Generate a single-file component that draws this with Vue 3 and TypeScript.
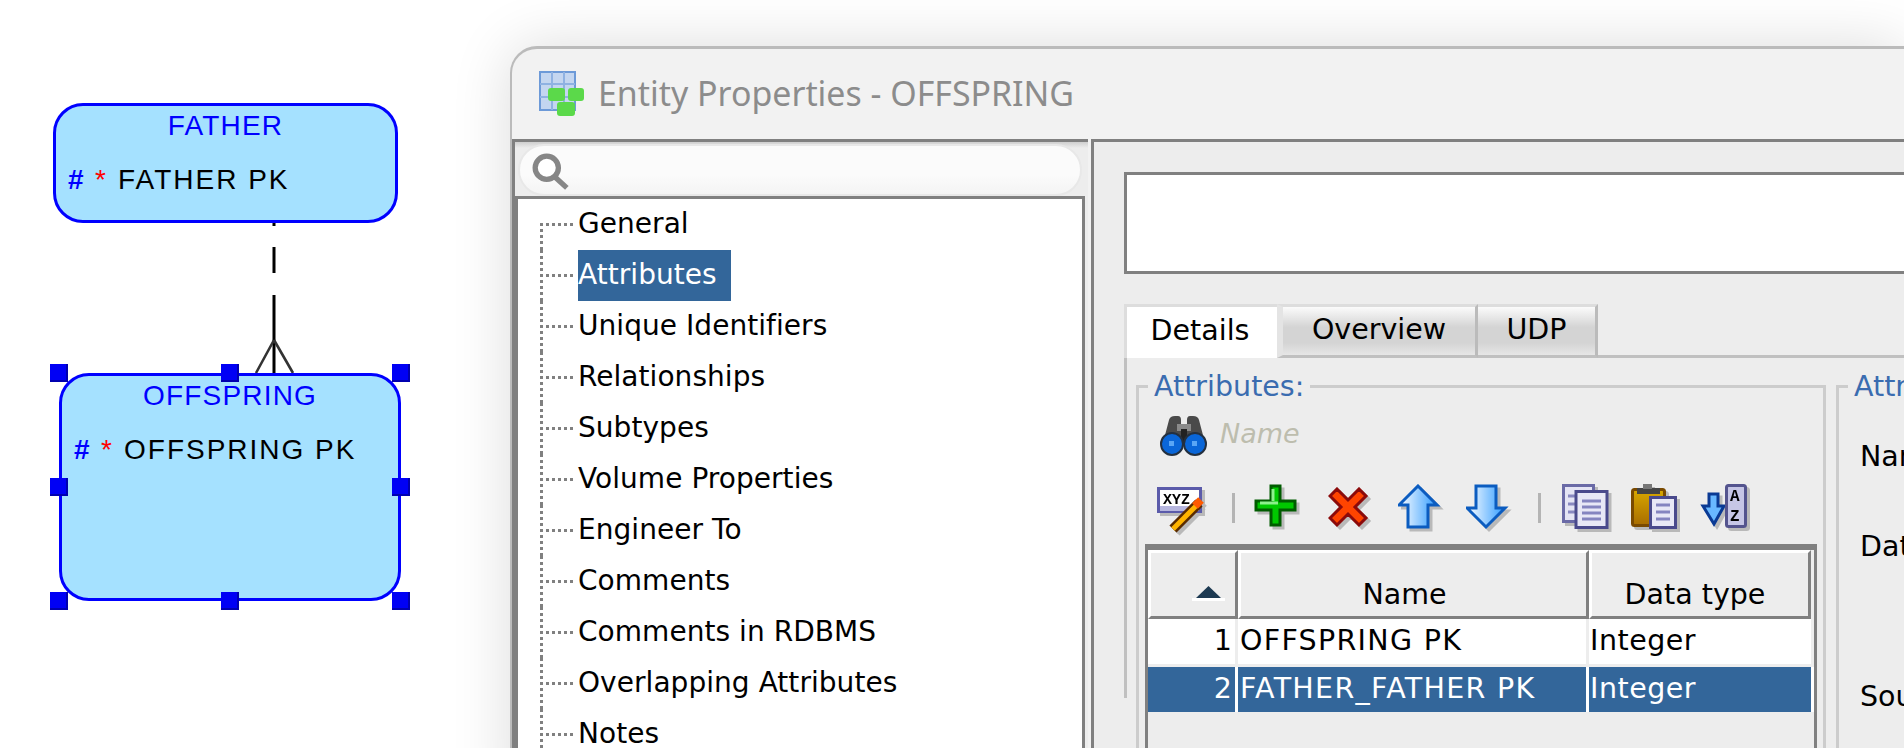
<script setup lang="ts">
const treeItems: string[] = [
  'General', 'Attributes', 'Unique Identifiers', 'Relationships', 'Subtypes', 'Volume Properties',
  'Engineer To', 'Comments', 'Comments in RDBMS', 'Overlapping Attributes', 'Notes'
]
const handles: { x: number; y: number }[] = [
  { x: 50, y: 364 }, { x: 221, y: 364 }, { x: 392, y: 364 },
  { x: 50, y: 478 }, { x: 392, y: 478 },
  { x: 50, y: 592 }, { x: 221, y: 592 }, { x: 392, y: 592 }
]
const rows = [
  { n: 1, name: 'OFFSPRING PK', type: 'Integer', selected: false },
  { n: 2, name: 'FATHER_FATHER PK', type: 'Integer', selected: true }
]
</script>

<template>
  <div class="page">
    <section class="canvas">
      <svg class="rel" width="60" height="160" viewBox="0 0 60 160">
        <path d="M30 3V6M30 27V53M30 75V153" stroke="#000" stroke-width="3" fill="none" />
        <path d="M30 120L12 153M30 120L49 153" stroke="#333" stroke-width="2.6" fill="none" />
      </svg>
      <div class="entity father">
        <div class="entity-title">FATHER</div>
        <div class="attr"><span class="hash">#</span><span class="star">*</span><span>FATHER PK</span></div>
      </div>
      <div class="entity offspring">
        <div class="entity-title">OFFSPRING</div>
        <div class="attr"><span class="hash">#</span><span class="star">*</span><span>OFFSPRING PK</span></div>
      </div>
      <i v-for="(h, i) in handles" :key="i" class="handle" :style="{ left: h.x + 'px', top: h.y + 'px' }"></i>
    </section>

    <section class="dialog">
      <header class="titlebar">
        <svg width="46" height="46" viewBox="0 0 46 46">
          <rect x="1" y="2" width="35" height="38" fill="#c4d6f0" stroke="#6d9ad8" stroke-width="2" />
          <path d="M1 14H36M1 27H36M13 2V40M25 2V40" stroke="#8fb2e2" stroke-width="2" fill="none" />
          <rect x="9" y="18" width="17" height="13" rx="3" fill="#5bd94a" />
          <rect x="29" y="18" width="16" height="13" rx="3" fill="#5bd94a" />
          <rect x="18" y="32" width="18" height="14" rx="3" fill="#5bd94a" />
        </svg>
        <span class="title-text">Entity Properties - OFFSPRING</span>
      </header>

      <div class="panes">
        <aside class="left-pane">
          <div class="search-band">
            <div class="search-pill">
              <svg width="38" height="38" viewBox="0 0 36 36">
                <circle cx="14" cy="14" r="11" fill="#fff" stroke="#868686" stroke-width="5" />
                <path d="M22 23L33 33" stroke="#868686" stroke-width="5" />
              </svg>
            </div>
          </div>
          <ul class="tree">
            <li v-for="(item, i) in treeItems" :key="item" class="tree-row">
              <i class="dots"></i>
              <span class="tree-label" :class="{ active: i === 1 }">{{ item }}</span>
            </li>
            <li class="tree-rest"></li>
          </ul>
        </aside>

        <main class="right-pane">
          <div class="name-box"></div>
          <nav class="tabs">
            <div class="tab current">Details</div>
            <div class="tab overview">Overview</div>
            <div class="tab udp">UDP</div>
            <div class="tab-fill"></div>
          </nav>
          <div class="tab-body">
            <div class="group list-group">
              <span class="legend">Attributes:</span>
              <div class="filter">
                <svg width="48" height="42" viewBox="0 0 48 42">
                  <path d="M4 24L9 5Q10 1 15 1H18Q21 1 21 5V24ZM44 24L39 5Q38 1 33 1H30Q27 1 27 5V24Z" fill="#4a4a4a" />
                  <rect x="17" y="9" width="14" height="7" fill="#8a8a8a" />
                  <rect x="21" y="14" width="6" height="16" fill="#222" />
                  <circle cx="12" cy="29" r="11" fill="#0a66d8" stroke="#24303f" stroke-width="2" />
                  <circle cx="35" cy="29" r="11" fill="#0a66d8" stroke="#24303f" stroke-width="2" />
                  <rect x="9" y="26" width="5" height="5" fill="#5aa6f5" />
                  <rect x="32" y="26" width="5" height="5" fill="#5aa6f5" />
                </svg>
                <span class="filter-text">Name</span>
              </div>
              <div class="toolbar">
                <svg class="tb-edit" width="48" height="46" viewBox="0 0 48 46">
                  <rect x="1.5" y="1.5" width="42" height="23" fill="#fff" stroke="#5b5baa" stroke-width="3" />
                  <rect x="3" y="19" width="39" height="5" fill="#b6b6de" />
                  <text x="6" y="17" class="icon-text">XYZ</text>
                  <path d="M42 16L16 42" stroke="#5a2c00" stroke-width="10" />
                  <path d="M41 17L16 42" stroke="#ffb400" stroke-width="5" />
                  <path d="M44 13L38 19" stroke="#ff5a00" stroke-width="8" />
                </svg>
                <i class="tb-sep first"></i>
                <svg class="tb-plus" width="46" height="46" viewBox="0 0 46 46">
                  <path d="M17 2H26V17H41V26H26V41H17V26H2V17H17Z" fill="#00c800" stroke="#005c00" stroke-width="3" />
                  <path d="M19 5V17M6 19H24" stroke="#8cf08c" stroke-width="3" />
                </svg>
                <svg class="tb-del" width="42" height="42" viewBox="0 0 42 42">
                  <path d="M9 2L20 13L31 2L38 9L27 20L38 31L31 38L20 27L9 38L2 31L13 20L2 9Z" fill="#ff4400" stroke="#8c0a0a" stroke-width="3" />
                </svg>
                <svg class="tb-up" width="44" height="46" viewBox="0 0 44 46">
                  <defs>
                    <linearGradient id="arrowFill" x1="0" x2="1" y1="0" y2="0">
                      <stop offset="0" stop-color="#ffffff" />
                      <stop offset="1" stop-color="#2f9bff" />
                    </linearGradient>
                  </defs>
                  <path d="M20 2L39 21H30V43H10V21H1Z" fill="url(#arrowFill)" stroke="#0b5cc0" stroke-width="3" />
                </svg>
                <svg class="tb-down" width="44" height="46" viewBox="0 0 44 46">
                  <path d="M10 2H30V24H39L20 43L1 24H10Z" fill="url(#arrowFill)" stroke="#0b5cc0" stroke-width="3" />
                </svg>
                <i class="tb-sep second"></i>
                <svg class="tb-copy" width="50" height="48" viewBox="0 0 50 48">
                  <rect x="1.5" y="1.5" width="30" height="36" fill="#e4e4f4" stroke="#6a6aa6" stroke-width="3" />
                  <path d="M6 12H14M6 20H14M6 28H14" stroke="#8888c0" stroke-width="3" />
                  <rect x="14" y="7.500" width="31" height="36" fill="#e8e8f6" stroke="#4a4a8c" stroke-width="3" />
                  <path d="M20 17H39M20 23H39M20 29H39M20 35H39" stroke="#8585c0" stroke-width="3" />
                </svg>
                <svg class="tb-paste" width="50" height="48" viewBox="0 0 50 48">
                  <defs>
                    <linearGradient id="clip" x1="0" x2="0" y1="0" y2="1">
                      <stop offset="0" stop-color="#d8a800" />
                      <stop offset="1" stop-color="#a86c00" />
                    </linearGradient>
                  </defs>
                  <rect x="1.500" y="5.500" width="32" height="36" rx="2" fill="url(#clip)" stroke="#7a4a00" stroke-width="3" />
                  <rect x="6" y="4" width="23" height="6" fill="#444" />
                  <rect x="12" y="0" width="9" height="5" fill="#777" />
                  <rect x="19.500" y="13.500" width="25" height="30" fill="#e8e8f6" stroke="#4a4a8c" stroke-width="3" />
                  <path d="M25 21H39M25 28H39M25 35H39" stroke="#8585c0" stroke-width="3" />
                </svg>
                <svg class="tb-sort" width="50" height="48" viewBox="0 0 50 48">
                  <path d="M9 10H18V22H24L14 40L3 22H9Z" fill="#69b8ff" stroke="#0a3a94" stroke-width="3" />
                  <rect x="26.500" y="1.500" width="19" height="41" rx="2" fill="#c6c6e6" stroke="#54548e" stroke-width="3" />
                  <text x="30" y="17" class="icon-text sort">A</text>
                  <text x="30" y="37" class="icon-text sort">Z</text>
                </svg>
              </div>
              <div class="table">
                <div class="thead">
                  <div class="th num">
                    <svg class="sort-tri" width="33" height="15" viewBox="0 0 33 15">
                      <path d="M16.500 0L29 12H4Z" fill="#1d3a52" />
                      <rect y="12" width="33" height="3" fill="#fff" />
                    </svg>
                  </div>
                  <div class="th col-name"><span>Name</span></div>
                  <div class="th col-type"><span>Data type</span></div>
                </div>
                <div v-for="r in rows" :key="r.n" class="tr" :class="{ selected: r.selected }">
                  <div class="td num">{{ r.n }}</div>
                  <div class="td col-name">{{ r.name }}</div>
                  <div class="td col-type">{{ r.type }}</div>
                </div>
              </div>
            </div>
            <div class="group form-group">
              <span class="legend">Attribute Properties</span>
              <div class="form-label name-label">Name</div>
              <div class="form-label type-label">Data type</div>
              <div class="form-label source-label">Source</div>
            </div>
          </div>
        </main>
      </div>
    </section>
  </div>
</template>

<style>
html, body { margin: 0; background: #fff; overflow: hidden; }
</style>

<style scoped>
.page { width: 1904px; height: 748px; display: flex; overflow: hidden; background: #fff; font-family: "DejaVu Sans", sans-serif; color: #000; }
.canvas { position: relative; flex: 0 0 510px; height: 748px; }
.rel { position: absolute; left: 243.500px; top: 220px; }
.entity { position: absolute; box-sizing: border-box; border: 3px solid #0000ff; background: #a5e1ff; font-family: "Liberation Sans", sans-serif; font-size: 28px; line-height: 28px; letter-spacing: 2px; }
.father { left: 53px; top: 103px; width: 345px; height: 120px; border-radius: 30px; }
.offspring { left: 59px; top: 373px; width: 342px; height: 228px; border-radius: 30px; }
.entity-title { color: #0000ff; text-align: center; height: 38px; padding-top: 6px; box-sizing: border-box; letter-spacing: 1.2px; }
.attr { display: flex; margin-top: 22px; padding-left: 12px; }
.hash { color: #0000ff; font-weight: 700; width: 27px; letter-spacing: 0; }
.star { color: #ff0000; width: 23px; letter-spacing: 0; }
.handle { position: absolute; width: 18px; height: 18px; box-sizing: border-box; background: #0000f5; border-right: 2px solid #0000b0; border-bottom: 2px solid #0000b0; }

.dialog { flex: 0 0 1394px; height: 760px; margin-top: 46px; box-sizing: border-box; border: 3px solid #bbb; border-width: 3px 0 0 2px; border-top-left-radius: 27px; background: #f2f2f2; box-shadow: 0 0 60px rgba(0, 0, 0, .14); overflow: hidden; display: flex; flex-direction: column; }
.titlebar { flex: 0 0 90px; display: flex; align-items: flex-start; padding: 21px 0 0 27px; box-sizing: border-box; gap: 13px; }
.title-text { font-family: "Noto Sans", sans-serif; font-size: 33.900px; line-height: 42px; color: #8c8c8c; white-space: nowrap; margin-top: 2px; }
.panes { flex: 1; min-height: 0; display: flex; gap: 3px; }

.left-pane { flex: 0 0 576px; box-sizing: border-box; display: flex; flex-direction: column; border-top: 3px solid #808080; border-left: 3px solid #808080; background: #ededed; }
.search-band { flex: 0 0 54px; padding: 0 3px 0 3px; box-sizing: border-box; background: linear-gradient(#cfcfcf, #ededed 6px); }
.search-pill { height: 52px; margin-top: 2px; margin-right: 3px; border-radius: 26px; box-sizing: border-box; background: linear-gradient(#fbfbfb 60%, #f4f4f4); border: 2px solid #e8e8e8; padding: 7px 0 0 12px; }
.tree { flex: 1; margin: 0 3px 0 0; padding: 0; list-style: none; background: #fff; border: 3px solid #808080; overflow: hidden; display: flex; flex-direction: column; }
.tree-row { flex: 0 0 51px; display: flex; align-items: center; padding-left: 22px; background: repeating-linear-gradient(#808080 0 3px, transparent 3px 6px) 22px 0 / 3px 100% no-repeat; }
.tree-row:first-child { background-position: 22px 24px; }
.tree-rest { flex: 1; margin-left: 22px; width: 3px; background: repeating-linear-gradient(#808080 0 3px, transparent 3px 6px); }
.dots { flex: 0 0 35px; height: 3px; margin-right: 3px; background: repeating-linear-gradient(90deg, #808080 0 3px, transparent 3px 6px); }
.tree-label { font-size: 28px; line-height: 49px; height: 51px; white-space: nowrap; letter-spacing: .05px; }
.tree-label.active { background: #33669a; color: #fff; width: 153px; }

.right-pane { flex: 1; min-width: 0; box-sizing: border-box; border-top: 3px solid #808080; border-left: 3px solid #808080; background: #ededed; padding: 30px 0 0 30px; overflow: hidden; }
.name-box { height: 102px; box-sizing: border-box; background: #fff; border: 3px solid #808080; border-right: 0; }
.tabs { display: flex; height: 54px; margin-top: 30px; font-size: 28.500px; }
.tab { box-sizing: border-box; text-align: center; line-height: 50px; white-space: nowrap; }
.tab.current { flex: 0 0 153px; height: 54px; border: 3px solid #ddd; border-width: 3px 0 0 3px; background: #fff; line-height: 48px; padding-right: 4px; }
.tab.overview, .tab.udp { height: 54px; border-top: 3px solid #ddd; border-right: 3px solid #bbb; border-bottom: 3px solid #c0c0c0; background: linear-gradient(#fbfbfb, #d4d4d4 42%, #d4d4d4 75%, #e6e6e6); line-height: 46px; }
.tab.overview { flex: 0 0 201px; border-left: 6px solid #e4e4e4; }
.tab.udp { flex: 0 0 120px; }
.tab-fill { flex: 1; border-bottom: 3px solid #c0c0c0; }
.tab-body { display: flex; gap: 10px; border-left: 3px solid #c0c0c0; padding: 27px 0 0 9px; height: 340px; box-sizing: border-box; }
.group { position: relative; box-sizing: border-box; border: 3px solid #ccc; border-bottom: 0; height: 400px; flex: none; }
.list-group { width: 690px; padding: 27px 0 0 6px; }
.form-group { flex: 1; min-width: 200px; padding-left: 21px; }
.legend { position: absolute; top: -18px; left: 9px; padding: 0 6px; background: #ededed; color: #3a6cb0; font-size: 28.500px; line-height: 34px; white-space: nowrap; }
.filter { display: flex; align-items: center; height: 42px; padding-left: 15px; }
.filter-text { font-style: italic; color: #bdbdae; font-size: 27px; margin: -5px 0 0 12px; }
.toolbar { display: flex; align-items: flex-start; height: 46px; margin-top: 27px; }
.toolbar svg { flex: none; filter: drop-shadow(3px 3px 0 rgba(0, 0, 0, .22)); }
.icon-text { font-family: "Liberation Mono", monospace; font-weight: 700; font-size: 15px; fill: #000; }
.icon-text.sort { font-size: 16px; }
.tb-edit { margin: 3px 0 0 12px; }
.tb-sep { flex: none; width: 3px; height: 30px; background: #b4b4b4; margin-top: 9px; }
.tb-sep.first { margin-left: 27px; }
.tb-plus { margin-left: 19px; }
.tb-del { margin: 3px 0 0 28px; }
.tb-up { margin-left: 28px; }
.tb-down { margin-left: 24px; }
.tb-sep.second { margin-left: 28px; }
.tb-copy { margin-left: 21px; }
.tb-paste { margin-left: 19px; }
.tb-sort { margin-left: 19px; }

.table { width: 672px; margin-top: 14px; box-sizing: border-box; border-top: 6px solid #808080; border-left: 3px solid #808080; border-right: 3px solid #808080; height: 260px; font-size: 28.500px; }
.thead { display: flex; height: 69px; box-sizing: border-box; }
.th { box-sizing: border-box; height: 69px; border-top: 3px solid #fff; border-bottom: 3px solid #808080; border-left: 3px solid #fff; display: flex; align-items: flex-end; justify-content: center; padding-bottom: 5px; }
.thead .num { flex: 0 0 90px; border-right: 3px solid #808080; }
.thead .col-name { flex: 0 0 351px; border-right: 3px solid #808080; padding-right: 18px; }
.thead .col-type { flex: 0 0 222px; margin-right: -3px; border-right: 3px solid #808080; padding-right: 10px; }
.sort-tri { margin: 0 0 10px 30px; flex: none; }
.tr { display: flex; height: 45px; margin-bottom: 3px; line-height: 43px; white-space: nowrap; gap: 3px; background: #ededed; }
.td { background: #fff; box-sizing: border-box; overflow: hidden; }
.td.num { flex: 0 0 87px; text-align: right; padding-right: 3px; }
.td.col-name { flex: 0 0 348px; padding-left: 2px; letter-spacing: 1.300px; }
.td.col-type { flex: 0 0 222px; padding-left: 1px; letter-spacing: .5px; }
.tr.selected { background: #fff; }
.tr.selected .td { background: #33669a; color: #fff; }
.form-label { font-size: 28.500px; line-height: 34px; white-space: nowrap; }
.name-label { margin-top: 52px; }
.type-label { margin-top: 56px; }
.source-label { margin-top: 116px; }
</style>
